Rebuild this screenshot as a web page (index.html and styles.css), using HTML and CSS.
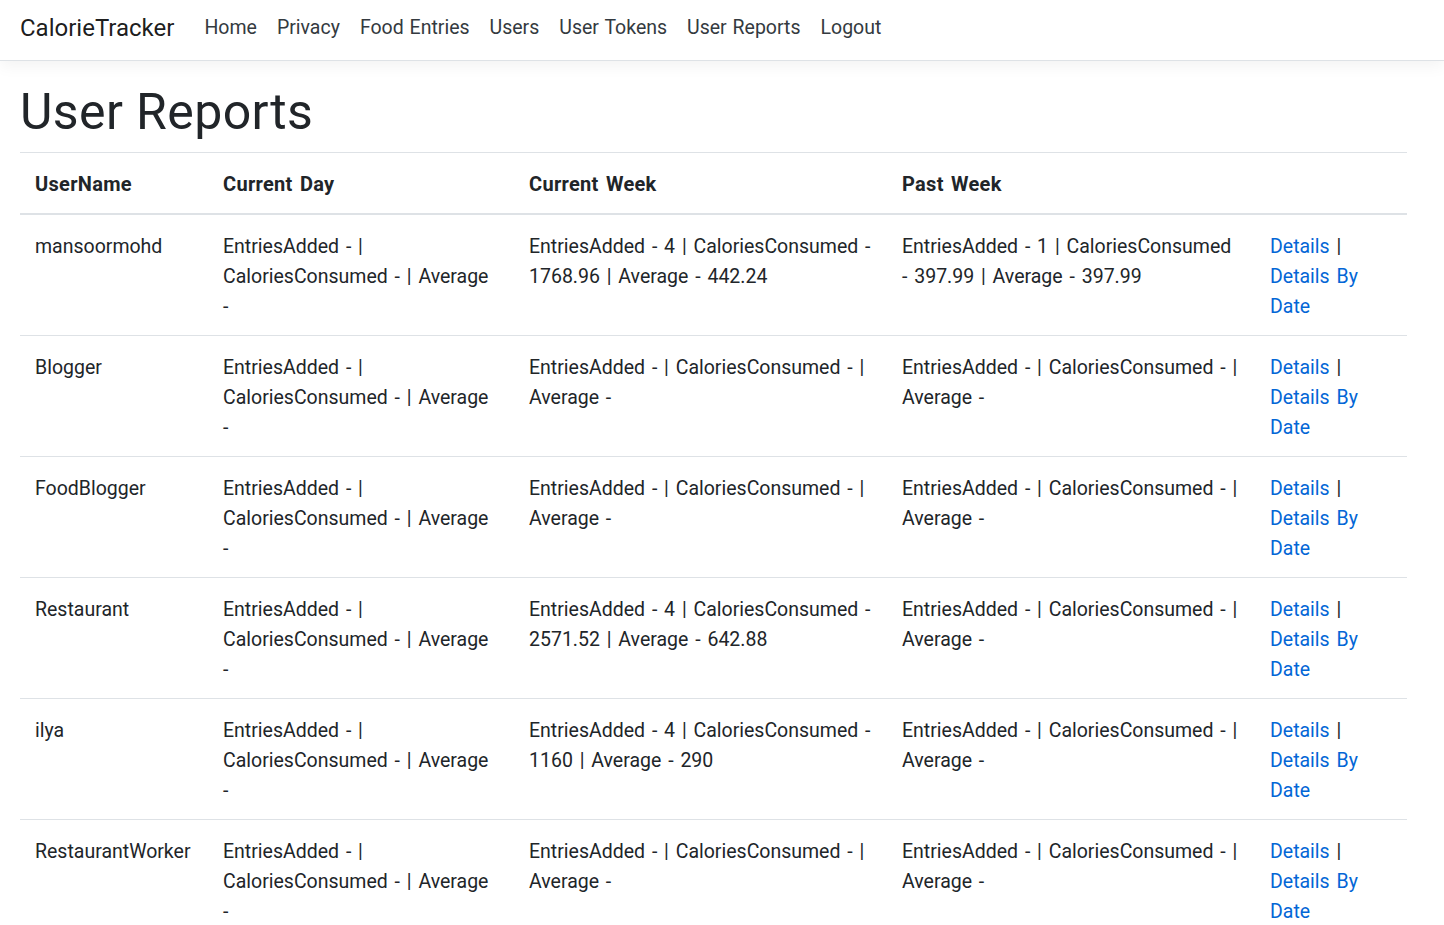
FILE: index.html
```html
<!DOCTYPE html>
<html lang="en">
<head>
<meta charset="utf-8">
<title>User Reports - CalorieTracker</title>
<link rel="stylesheet" href="styles.css">
</head>
<body>
<header class="site-header">
  <nav class="navbar">
    <a class="brand" href="#">CalorieTracker</a>
    <ul class="nav">
      <li><a class="nav-link" href="#">Home</a></li>
      <li><a class="nav-link" href="#">Privacy</a></li>
      <li><a class="nav-link" href="#">Food Entries</a></li>
      <li><a class="nav-link" href="#">Users</a></li>
      <li><a class="nav-link" href="#">User Tokens</a></li>
      <li><a class="nav-link" href="#">User Reports</a></li>
      <li><a class="nav-link" href="#">Logout</a></li>
    </ul>
  </nav>
</header>
<main class="container">
  <h1 class="page-title">User Reports</h1>
  <table class="table">
    <colgroup>
      <col class="c-user"><col class="c-day"><col class="c-week"><col class="c-past"><col class="c-act">
    </colgroup>
    <thead>
      <tr><th>UserName</th><th>Current Day</th><th>Current Week</th><th>Past Week</th><th></th></tr>
    </thead>
    <tbody>
      <tr>
        <td>mansoormohd</td>
        <td class="day">EntriesAdded - <span class="sep">|</span> CaloriesConsumed - <span class="sep">|</span> Average -</td>
        <td class="week">EntriesAdded - 4 <span class="sep">|</span> CaloriesConsumed - 1768.96 <span class="sep">|</span> Average - 442.24</td>
        <td>EntriesAdded - 1 <span class="sep">|</span> CaloriesConsumed - 397.99 <span class="sep">|</span> Average - 397.99</td>
        <td><a href="#">Details</a> <span class="sep">|</span> <a href="#">Details By Date</a></td>
      </tr>
      <tr>
        <td>Blogger</td>
        <td class="day">EntriesAdded - <span class="sep">|</span> CaloriesConsumed - <span class="sep">|</span> Average -</td>
        <td class="week">EntriesAdded - <span class="sep">|</span> CaloriesConsumed - <span class="sep">|</span> Average -</td>
        <td>EntriesAdded - <span class="sep">|</span> CaloriesConsumed - <span class="sep">|</span> Average -</td>
        <td><a href="#">Details</a> <span class="sep">|</span> <a href="#">Details By Date</a></td>
      </tr>
      <tr>
        <td>FoodBlogger</td>
        <td class="day">EntriesAdded - <span class="sep">|</span> CaloriesConsumed - <span class="sep">|</span> Average -</td>
        <td class="week">EntriesAdded - <span class="sep">|</span> CaloriesConsumed - <span class="sep">|</span> Average -</td>
        <td>EntriesAdded - <span class="sep">|</span> CaloriesConsumed - <span class="sep">|</span> Average -</td>
        <td><a href="#">Details</a> <span class="sep">|</span> <a href="#">Details By Date</a></td>
      </tr>
      <tr>
        <td>Restaurant</td>
        <td class="day">EntriesAdded - <span class="sep">|</span> CaloriesConsumed - <span class="sep">|</span> Average -</td>
        <td class="week">EntriesAdded - 4 <span class="sep">|</span> CaloriesConsumed - 2571.52 <span class="sep">|</span> Average - 642.88</td>
        <td>EntriesAdded - <span class="sep">|</span> CaloriesConsumed - <span class="sep">|</span> Average -</td>
        <td><a href="#">Details</a> <span class="sep">|</span> <a href="#">Details By Date</a></td>
      </tr>
      <tr>
        <td>ilya</td>
        <td class="day">EntriesAdded - <span class="sep">|</span> CaloriesConsumed - <span class="sep">|</span> Average -</td>
        <td class="week">EntriesAdded - 4 <span class="sep">|</span> CaloriesConsumed - 1160 <span class="sep">|</span> Average - 290</td>
        <td>EntriesAdded - <span class="sep">|</span> CaloriesConsumed - <span class="sep">|</span> Average -</td>
        <td><a href="#">Details</a> <span class="sep">|</span> <a href="#">Details By Date</a></td>
      </tr>
      <tr>
        <td>RestaurantWorker</td>
        <td class="day">EntriesAdded - <span class="sep">|</span> CaloriesConsumed - <span class="sep">|</span> Average -</td>
        <td class="week">EntriesAdded - <span class="sep">|</span> CaloriesConsumed - <span class="sep">|</span> Average -</td>
        <td>EntriesAdded - <span class="sep">|</span> CaloriesConsumed - <span class="sep">|</span> Average -</td>
        <td><a href="#">Details</a> <span class="sep">|</span> <a href="#">Details By Date</a></td>
      </tr>
    </tbody>
  </table>
</main>
</body>
</html>
```
FILE: styles.css
```css
html, body {
  margin: 0;
  padding: 0;
}
body {
  font-family: Roboto, "Open Sans", "Liberation Sans", sans-serif;
  font-size: 19.5px;
  line-height: 30px;
  color: #212529;
  background: #fff;
}
a {
  color: #0366d6;
  text-decoration: none;
}
.site-header {
  background: #fff;
  border-bottom: 1px solid #dee2e6;
  box-shadow: 0 5px 15px rgba(0, 0, 0, 0.05);
  margin-bottom: 21px;
}
.navbar {
  height: 60px;
  display: flex;
  align-items: center;
  padding: 0 20px;
  box-sizing: border-box;
}
.brand {
  font-size: 24px;
  color: rgba(0, 0, 0, 0.9);
  margin-right: 20px;
  line-height: 1;
  padding-bottom: 4px;
}
.nav {
  list-style: none;
  margin: 0;
  padding: 0;
  display: flex;
  padding-bottom: 4px;
}
.nav-link {
  display: block;
  padding: 0 10px;
  color: #343a40;
  word-spacing: 1px;
}
.container {
  padding: 0 37px 0 20px;
}
.page-title {
  font-size: 50px;
  font-weight: 400;
  line-height: 60px;
  margin: 0 0 10px;
  letter-spacing: 0.4px;
}
.table {
  width: 1387px;
  border-collapse: collapse;
  table-layout: fixed;
  word-spacing: 2px;
}
.sep {
  color: #212529;
}
.c-user { width: 188px; }
.c-day { width: 306px; }
.c-week { width: 373px; }
.c-past { width: 368px; }
.c-act { width: 152px; }
.table th,
.table td {
  padding: 17px 15px 13px;
  text-align: left;
  vertical-align: top;
  border-top: 1px solid #dee2e6;
}
.table td.day {
  padding-right: 18px;
}
.table td.week {
  padding-right: 12px;
}
.table thead th {
  font-size: 20px;
  font-weight: 700;
  letter-spacing: 0.3px;
  border-bottom: 2px solid #dee2e6;
  vertical-align: bottom;
  padding-top: 16px;
  padding-bottom: 14px;
}
```
